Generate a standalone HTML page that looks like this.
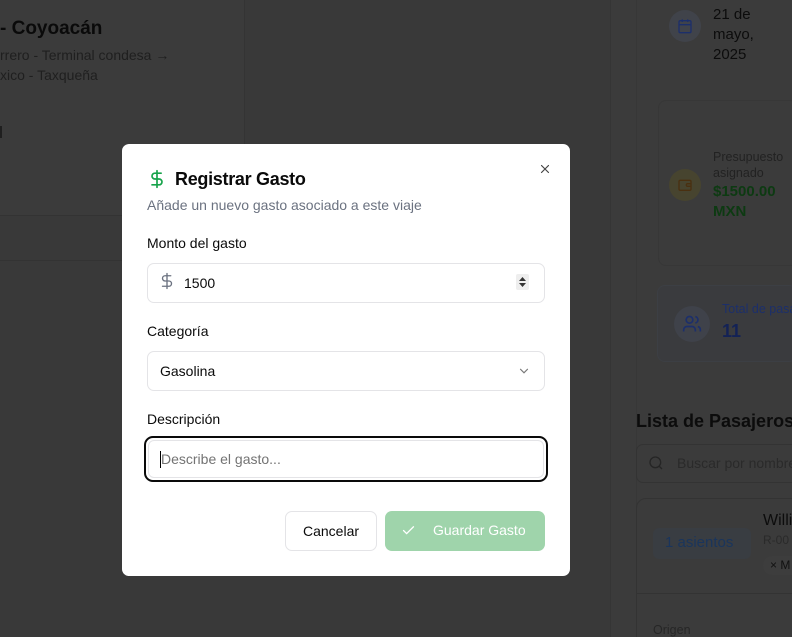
<!DOCTYPE html>
<html><head><meta charset="utf-8"><style>
*{box-sizing:border-box;margin:0;padding:0}
html,body{width:792px;height:637px;overflow:hidden}
body{background:#393939;font-family:"Liberation Sans",sans-serif;position:relative}
.a{position:absolute;white-space:nowrap}
.t{color:#0c0c0c}
</style></head><body>
<div class="a" style="left:0;top:0;width:245px;height:216px;background:#3b3b3b;border-right:1px solid #343434;border-bottom:1px solid #333;border-bottom-right-radius:8px"></div>
<div class="a" style="left:0;top:216px;width:245px;height:45px;border-bottom:1px solid #333"></div>
<div class="a t" style="left:0;top:18px;font-size:19px;font-weight:bold;color:#0a0a0a">- Coyoacán</div>
<div class="a" style="left:0;top:45px;font-size:14px;color:#1f1f1f;line-height:20px">rrero - Terminal condesa →<br>xico - Taxqueña</div>
<div class="a" style="left:0;top:126px;width:2px;height:12px;background:#1f1f1f"></div>
<div class="a" style="left:610px;top:0;width:182px;height:637px;background:#3b3b3b;border-left:1px solid #353535"></div>
<div class="a" style="left:636px;top:0;width:156px;height:637px;border-left:1px solid #373737"></div>
<div class="a" style="left:669px;top:10px;width:32px;height:32px;border-radius:50%;background:#40434a"></div>
<svg class="a" style="left:677px;top:18px" width="16" height="16" viewBox="0 0 24 24" fill="none" stroke="#1c2f6b" stroke-width="2"><rect x="3" y="4" width="18" height="18" rx="2"/><path d="M16 2v4M8 2v4M3 10h18"/></svg>
<div class="a t" style="left:713px;top:5px;font-size:15px;line-height:20px">21 de<br>mayo,<br>2025</div>
<div class="a" style="left:658px;top:100px;width:140px;height:166px;border:1px solid #373737;border-radius:8px"></div>
<div class="a" style="left:669px;top:169px;width:32px;height:32px;border-radius:50%;background:#47442f"></div>
<svg class="a" style="left:677px;top:177px" width="16" height="16" viewBox="0 0 24 24" fill="none" stroke="#4a3010" stroke-width="2"><rect x="3" y="5" width="18" height="15" rx="2"/><path d="M21 10h-5a2 2 0 0 0 0 4h5"/></svg>
<div class="a" style="left:713px;top:149px;font-size:12.5px;color:#222;line-height:16px">Presupuesto<br>asignado</div>
<div class="a" style="left:713px;top:182px;font-size:15px;font-weight:bold;color:#0d3a12;line-height:20px">$1500.00<br>MXN</div>
<div class="a" style="left:657px;top:285px;width:140px;height:77px;border:1px solid #3c3f44;border-radius:8px;background:#3a3b3e"></div>
<div class="a" style="left:674px;top:306px;width:36px;height:36px;border-radius:50%;background:#3f424a"></div>
<svg class="a" style="left:682px;top:314px" width="20" height="20" viewBox="0 0 24 24" fill="none" stroke="#1c2f6b" stroke-width="2"><circle cx="9" cy="7" r="4"/><path d="M2 21v-2a4 4 0 0 1 4-4h6a4 4 0 0 1 4 4v2M16 3.1a4 4 0 0 1 0 7.8M22 21v-2a4 4 0 0 0-3-3.9"/></svg>
<div class="a" style="left:722px;top:302px;font-size:12.5px;color:#1c2f6b">Total de pasajeros</div>
<div class="a" style="left:722px;top:321px;font-size:18px;font-weight:bold;color:#132256">11</div>
<div class="a" style="left:636px;top:411px;font-size:18px;font-weight:bold;color:#0c0c0c">Lista de Pasajeros</div>
<div class="a" style="left:636px;top:444px;width:170px;height:39px;border:1px solid #333;border-radius:7px"></div>
<svg class="a" style="left:648px;top:455px" width="16" height="16" viewBox="0 0 24 24" fill="none" stroke="#252525" stroke-width="2"><circle cx="11" cy="11" r="8"/><path d="M21 21l-4.3-4.3"/></svg>
<div class="a" style="left:677px;top:455px;font-size:14px;color:#2a2a2a">Buscar por nombre</div>
<div class="a" style="left:636px;top:498px;width:170px;height:150px;border:1px solid #333;border-radius:10px"></div>
<div class="a" style="left:653px;top:528px;width:98px;height:31px;border-radius:6px;background:#393d42"></div>
<div class="a" style="left:665px;top:534px;font-size:15px;color:#1a355c">1 asientos</div>
<div class="a t" style="left:763px;top:512px;font-size:16px">Willi</div>
<div class="a" style="left:763px;top:533px;font-size:12px;color:#2a2a2a">R-00</div>
<div class="a" style="left:763px;top:556px;width:40px;height:19px;border-radius:9px;background:#3d3d3d;font-size:12px;color:#111;padding:2px 7px">× M</div>
<div class="a" style="left:636px;top:593px;width:156px;border-top:1px solid #333"></div>
<div class="a" style="left:653px;top:623px;font-size:12.5px;color:#262626">Origen</div>

<div class="a" style="left:122px;top:144px;width:448px;height:432px;background:#fff;border-radius:7px"></div>
<svg class="a" style="left:147px;top:169px" width="20" height="20" viewBox="0 0 24 24" fill="none" stroke="#16a34a" stroke-width="2" stroke-linecap="round"><path d="M12 2v20M17 5H9.5a3.5 3.5 0 0 0 0 7h5a3.5 3.5 0 0 1 0 7H6"/></svg>
<div class="a" style="left:175px;top:169px;font-size:18px;font-weight:bold;color:#0a0a0a;letter-spacing:-0.3px">Registrar Gasto</div>
<svg class="a" style="left:538px;top:162px" width="14" height="14" viewBox="0 0 24 24" fill="none" stroke="#444" stroke-width="2" stroke-linecap="round"><path d="M18 6L6 18M6 6l12 12"/></svg>
<div class="a" style="left:147px;top:197px;font-size:14px;color:#6b7280">Añade un nuevo gasto asociado a este viaje</div>
<div class="a" style="left:147px;top:235px;font-size:14px;color:#0a0a0a">Monto del gasto</div>
<div class="a" style="left:147px;top:263px;width:398px;height:40px;border:1px solid #e4e4e7;border-radius:7px"></div>
<svg class="a" style="left:158px;top:272px" width="18" height="18" viewBox="0 0 24 24" fill="none" stroke="#6b7280" stroke-width="1.8" stroke-linecap="round"><path d="M12 2v20M17 5H9.5a3.5 3.5 0 0 0 0 7h5a3.5 3.5 0 0 1 0 7H6"/></svg>
<div class="a" style="left:184px;top:275px;font-size:14px;color:#0a0a0a">1500</div>
<div class="a" style="left:516px;top:274px;width:13px;height:16px;background:#eee;border-radius:2px"></div>
<svg class="a" style="left:518px;top:276px" width="9" height="12" viewBox="0 0 9 12"><path d="M4.5 1L8 5H1zM4.5 11L1 7h7z" fill="#333"/></svg>
<div class="a" style="left:147px;top:323px;font-size:14px;color:#0a0a0a">Categoría</div>
<div class="a" style="left:147px;top:351px;width:398px;height:40px;border:1px solid #e4e4e7;border-radius:7px"></div>
<div class="a" style="left:160px;top:363px;font-size:14px;color:#0a0a0a">Gasolina</div>
<svg class="a" style="left:517px;top:364px" width="14" height="14" viewBox="0 0 24 24" fill="none" stroke="#777" stroke-width="2" stroke-linecap="round"><path d="M6 9l6 6 6-6"/></svg>
<div class="a" style="left:147px;top:411px;font-size:14px;color:#0a0a0a">Descripción</div>
<div class="a" style="left:144px;top:436px;width:404px;height:46px;border:2px solid #0a0a0a;border-radius:9px"></div>
<div class="a" style="left:148px;top:440px;width:396px;height:38px;border:1px solid #e4e4e7;border-radius:6px"></div>
<div class="a" style="left:160px;top:451px;width:1px;height:17px;background:#000"></div>
<div class="a" style="left:161px;top:451px;font-size:14px;color:#737373">Describe el gasto...</div>
<div class="a" style="left:285px;top:511px;width:92px;height:40px;border:1px solid #e4e4e7;border-radius:7px;font-size:14px;color:#0a0a0a;text-align:center;line-height:38px">Cancelar</div>
<div class="a" style="left:385px;top:511px;width:160px;height:40px;background:#9fd4ab;border-radius:7px"></div>
<svg class="a" style="left:401px;top:523px" width="15" height="15" viewBox="0 0 24 24" fill="none" stroke="#fff" stroke-width="2" stroke-linecap="round"><path d="M20 6L9 17l-5-5"/></svg>
<div class="a" style="left:433px;top:522px;font-size:14px;color:#fff">Guardar Gasto</div>
</body></html>
